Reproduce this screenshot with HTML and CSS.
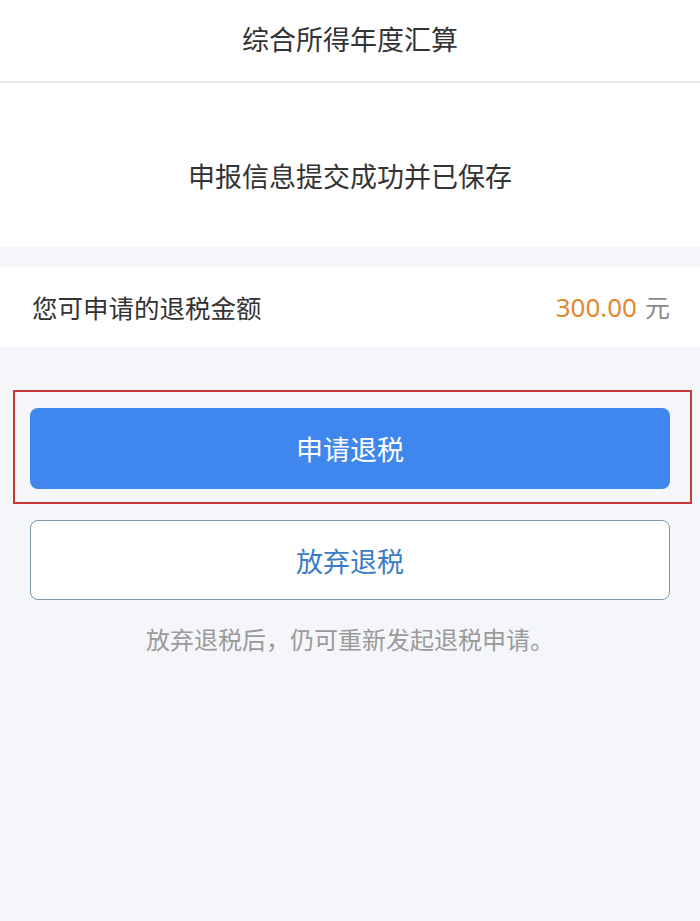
FILE: index.html
```html
<!DOCTYPE html>
<html lang="zh-CN">
<head>
<meta charset="utf-8">
<title>综合所得年度汇算</title>
<link rel="stylesheet" href="styles.css">
</head>
<body>
<div class="page">
  <header class="topbar">
    <h1 class="title">综合所得年度汇算</h1>
  </header>
  <section class="status">
    <p class="status-text">申报信息提交成功并已保存</p>
  </section>
  <div class="spacer"></div>
  <section class="amount-row">
    <span class="amount-label">您可申请的退税金额</span>
    <span class="amount-value"><span class="num">300.00</span> <span class="unit">元</span></span>
  </section>
  <section class="actions">
    <div class="highlight">
      <button class="btn btn-primary">申请退税</button>
    </div>
    <button class="btn btn-outline">放弃退税</button>
    <p class="note">放弃退税后，仍可重新发起退税申请。</p>
  </section>
</div>
</body>
</html>
```

FILE: styles.css
```css
* { box-sizing: border-box; }
html, body {
  margin: 0;
  padding: 0;
  background: #f5f6f9;
  font-family: "Noto Sans CJK SC", "Noto Sans", sans-serif;
  color: #333;
}
.page {
  width: 700px;
  min-height: 921px;
  background: #f5f6f9;
}
.topbar {
  height: 83px;
  background: #fff;
  border-bottom: 2px solid #e7e7e7;
  display: flex;
  align-items: center;
  justify-content: center;
}
.title {
  margin: 0;
  font-size: 27px;
  font-weight: 400;
  color: #333;
  line-height: 1;
  padding-bottom: 4px;
}
.status {
  height: 164px;
  background: #fff;
  display: flex;
  align-items: center;
  justify-content: center;
  padding-top: 20px;
}
.status-text {
  margin: 0;
  font-size: 27px;
  line-height: 1;
  color: #333;
}
.spacer {
  height: 20px;
  background: #f5f6f9;
}
.amount-row {
  height: 80px;
  background: #fff;
  display: flex;
  align-items: center;
  justify-content: space-between;
  padding: 0 30px 0 32px;
}
.amount-label {
  font-size: 25.5px;
  color: #333;
  line-height: 1;
}
.amount-value {
  font-family: "Noto Sans", "Noto Sans CJK SC", sans-serif;
  line-height: 1;
  display: flex;
  align-items: baseline;
  gap: 8px;
}
.num {
  font-size: 26px;
  color: #e08a2f;
}
.unit {
  font-family: "Noto Sans CJK SC", sans-serif;
  font-size: 25px;
  color: #8a8a8a;
}
.actions {
  padding: 43px 8px 0 13px;
  display: flex;
  flex-direction: column;
  align-items: stretch;
}
.highlight {
  border: 2px solid #c8393a;
  height: 114px;
  padding: 16px 20px 0 15px;
}
.btn {
  display: flex;
  align-items: center;
  justify-content: center;
  width: 640px;
  height: 81px;
  border-radius: 8px;
  font-family: "Noto Sans CJK SC", sans-serif;
  font-size: 27px;
  cursor: pointer;
}
.btn-primary {
  background: #3f86ee;
  color: #fff;
  border: none;
}
.btn-outline {
  margin: 16px 0 0 17px;
  height: 80px;
  background: #fff;
  color: #3b7cc6;
  border: 1.5px solid #7c99a8;
}
.note {
  margin: 22px 0 0 0;
  text-align: center;
  font-size: 24px;
  color: #9a9a9a;
  line-height: 34px;
  padding-right: 5px;
}
```
